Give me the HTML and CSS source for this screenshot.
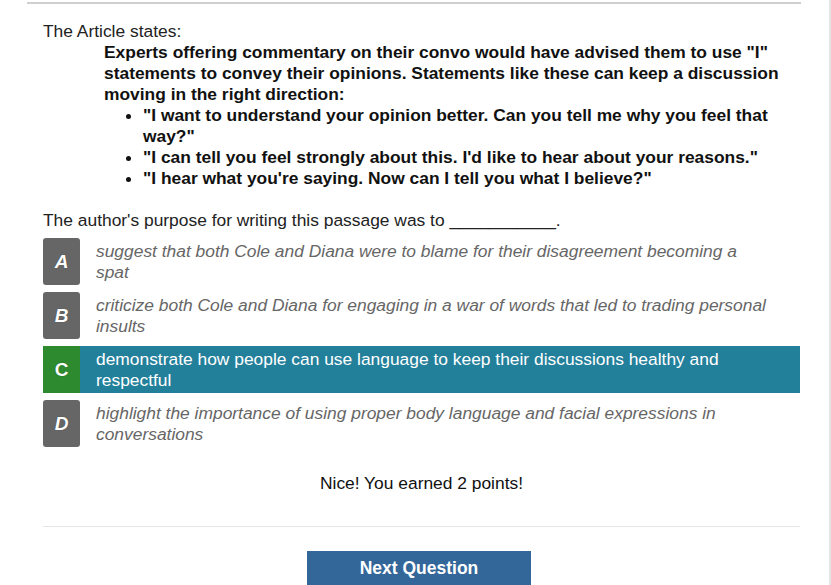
FILE: index.html
```html
<!DOCTYPE html>
<html>
<head>
<meta charset="utf-8">
<link rel="stylesheet" href="styles.css">
</head>
<body>
<div class="page">
  <div class="panel">
    <div class="content">
      <p class="intro">The Article states:</p>
      <div class="quote">
        <p>Experts offering commentary on their convo would have advised them to use "I" statements to convey their opinions. Statements like these can keep a discussion moving in the right direction:</p>
        <ul>
          <li>"I want to understand your opinion better. Can you tell me why you feel that way?"</li>
          <li>"I can tell you feel strongly about this. I'd like to hear about your reasons."</li>
          <li>"I hear what you're saying. Now can I tell you what I believe?"</li>
        </ul>
      </div>
      <p class="question">The author's purpose for writing this passage was to ___________.</p>
      <div class="options">
        <div class="option">
          <span class="letter">A</span>
          <span class="text">suggest that both Cole and Diana were to blame for their disagreement becoming a spat</span>
        </div>
        <div class="option">
          <span class="letter">B</span>
          <span class="text">criticize both Cole and Diana for engaging in a war of words that led to trading personal insults</span>
        </div>
        <div class="option correct">
          <span class="letter">C</span>
          <span class="text">demonstrate how people can use language to keep their discussions healthy and respectful</span>
        </div>
        <div class="option">
          <span class="letter">D</span>
          <span class="text">highlight the importance of using proper body language and facial expressions in conversations</span>
        </div>
      </div>
      <p class="feedback">Nice! You earned 2 points!</p>
      <hr class="divider">
      <div class="actions">
        <button class="next">Next Question</button>
      </div>
    </div>
  </div>
</div>
</body>
</html>
```
FILE: styles.css
```css
html, body {
  margin: 0;
  padding: 0;
  background: #fff;
}
body {
  font-family: "Liberation Sans", Arial, sans-serif;
  font-size: 17.4px;
  line-height: 21px;
  color: #222;
  overflow: hidden;
}
.page {
  width: 829px;
  height: 585px;
  border-right: 2px solid #e4e4e4;
  overflow: hidden;
}
.panel {
  margin: 2px 0 0 27px;
  width: 774px;
  border-top: 2px solid #cfcfcf;
}
.content {
  padding: 17px 1px 0 16px;
}
p {
  margin: 0;
}
.intro {
  color: #222;
}
.quote {
  margin-left: 61px;
  font-weight: bold;
  color: #111;
}
.quote ul {
  margin: 0;
  padding-left: 39px;
}
.question {
  margin-top: 21px;
}
.options {
  margin-top: 7px;
  display: flex;
  flex-direction: column;
  gap: 7px;
}
.option {
  display: flex;
  align-items: center;
  height: 47px;
}
.letter {
  flex: none;
  width: 37px;
  height: 47px;
  border-radius: 3px;
  background: #666;
  color: #fff;
  font-weight: bold;
  font-style: italic;
  font-size: 19px;
  display: flex;
  align-items: center;
  justify-content: center;
  text-shadow: 0 0 1px rgba(0,0,0,0.4);
}
.text {
  padding-left: 16px;
  padding-right: 28px;
  color: #666;
  font-style: italic;
}
.option.correct {
  background: #23809b;
}
.option.correct .letter {
  background: #2e8a2e;
  font-style: normal;
  border-radius: 0;
}
.option.correct .text {
  color: #fff;
  font-style: normal;
}
.feedback {
  margin-top: 26px;
  text-align: center;
  color: #111;
}
.divider {
  margin: 32px 0 0 0;
  border: 0;
  border-top: 1px solid #e6e6e6;
  height: 0;
}
.actions {
  display: flex;
  justify-content: center;
  margin-top: 24px;
}
.next {
  width: 224px;
  height: 40px;
  border: 0;
  background: #336699;
  color: #fff;
  font-family: "Liberation Sans", Arial, sans-serif;
  font-weight: bold;
  font-size: 17.5px;
  padding: 0 0 6px 0;
  margin-left: -5px;
}
```
